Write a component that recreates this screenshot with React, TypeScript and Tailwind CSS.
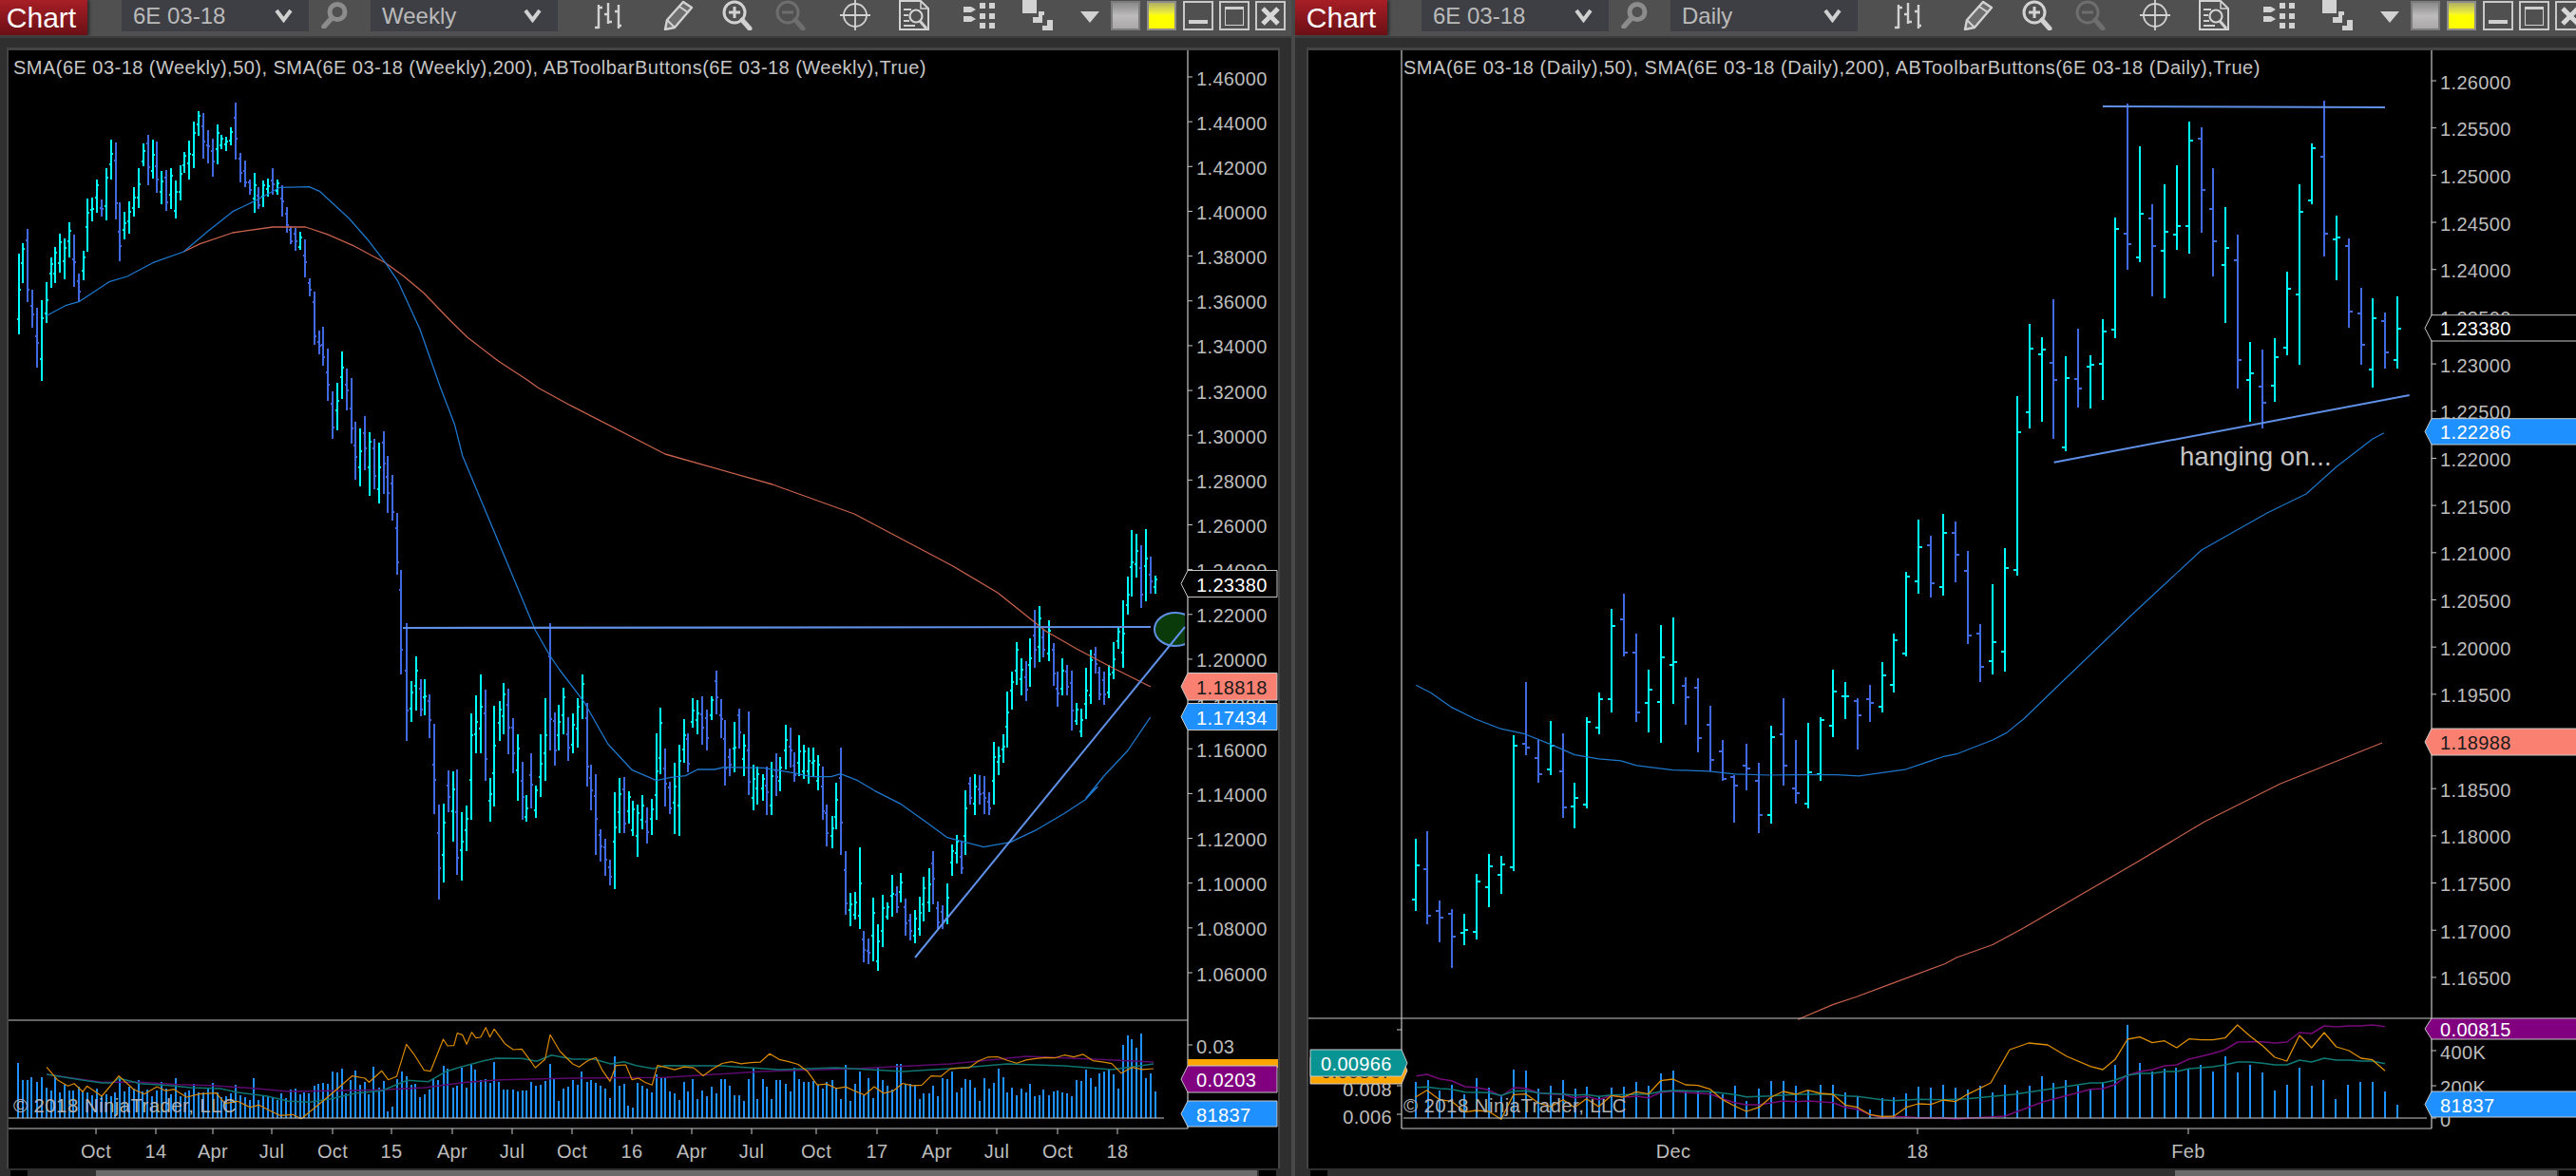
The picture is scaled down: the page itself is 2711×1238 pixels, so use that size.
import React from "react";

type Pt = [number, number];
type Bar = { x: number; t: number; b: number; o: number; c: number; up: boolean };

let seed = 12345;
const rnd = () => {
  seed = (seed * 16807) % 2147483647;
  return seed / 2147483647;
};

const pl = (pts: Pt[]) => "M" + pts.map((p) => `${p[0].toFixed(1)} ${p[1].toFixed(1)}`).join("L");

// ---------- weekly bars: [x, top, bottom, 1 = cyan] -----------
const w9: number[][] = [[52,562,815,1],[63,527,653,1],[75,484,713,0],[88,676,796,0],[102,733,922,0],[115,709,962,1],[128,652,780,1],[141,574,670,1],[152,541,655,1],[165,499,622,1],[178,514,641,1],[190,463,574,1],[203,502,665,0],[216,625,713,0],[229,553,644,1],[241,388,554,1],[254,385,460,1],[267,328,432,1],[280,390,445,0],[292,292,455,1],[305,202,327,1],[318,210,452,0],[330,400,584,0],[343,430,515,1],[356,395,497,1],[368,350,445,1],[381,292,418,1],[394,213,285,1],[407,187,344,0],[420,202,325,1],[432,208,370,0],[445,300,404,1],[458,298,425,0],[471,292,420,1],[483,330,449,1],[496,282,392,1],[508,240,305,1],[520,203,328,1],[533,145,290,1],[546,110,190,1],[559,118,262,0],[572,170,275,0],[585,198,317,0],[598,152,280,1],[610,185,232,1],[622,192,236,1],[635,163,218,1],[648,85,265,0],[661,242,335,0],[674,268,350,0],[687,328,375,0],[700,307,433,1],[711,352,420,0],[723,330,413,1],[737,325,380,1],[750,292,375,0],[763,328,375,1],[776,345,445,0],[788,415,495,0],[800,475,532,0],[812,480,553,0],[825,492,548,1],[838,515,635,0],[851,640,697,0],[864,680,848,0],[877,805,880,0],[888,793,914,0],[901,862,1025,0],[914,995,1147,0],[927,970,1120,1],[940,870,1020,1],[953,925,1057,0],[966,955,1160,0]];
const wMid: number[][] = [[374,444,505,0],[379,451,512,1],[384,438,495,0],[389,455,522,1],[394,462,515,0],[399,466,530,1],[404,454,520,0],[408,480,540,0],[413,500,548,0],[418,540,605,0]];
const w10: number[][] = [[44,-120,210,0],[54,48,420,0],[64,232,360,1],[74,153,325,1],[84,225,343,0],[92,225,340,1],[102,272,412,0],[111,367,650,0],[122,622,920,0],[131,618,868,1],[141,514,645,0],[150,516,738,1],[159,510,843,0],[168,645,862,1],[178,625,768,1],[188,334,668,1],[198,277,460,1],[208,210,460,1],[218,257,545,0],[228,537,675,1],[236,310,627,1],[246,295,420,1],[255,237,400,1],[265,255,462,0],[274,348,522,0],[284,400,610,1],[294,487,670,0],[302,590,675,1],[312,460,632,0],[321,560,662,1],[331,400,598,1],[341,285,545,1],[351,48,450,0],[361,330,498,0],[369,305,450,1],[378,252,400,1],[388,345,483,0],[398,333,458,1],[408,285,440,1],[417,210,350,1],[427,300,565,0],[435,495,640,0],[445,525,780,0],[454,700,800,0],[464,730,845,0],[474,795,875,0],[484,583,887,1],[494,537,710,1],[503,535,712,0],[513,578,680,1],[522,610,720,1],[531,622,785,1],[541,590,700,1],[551,630,743,0],[561,602,718,1],[570,396,670,1],[578,315,525,1],[588,445,627,0],[598,550,650,0],[608,490,715,1],[617,432,720,1],[627,352,490,1],[636,395,520,0],[645,285,378,1],[655,290,400,1],[664,278,432,0],[674,320,450,0],[684,278,355,1],[693,198,335,0],[703,288,410,0],[712,355,560,0],[722,445,530,0],[731,360,520,1],[741,318,445,0],[750,398,530,1],[760,328,590,0],[770,495,638,1],[779,500,622,1],[789,525,610,1],[798,500,655,0],[808,485,655,1],[817,458,595,0],[826,470,578,1],[837,370,510,1],[847,377,505,0],[855,455,548,0],[864,403,530,1],[874,433,540,1],[884,440,555,1],[894,440,530,1],[904,465,575,1],[913,500,670,0],[922,620,752,0],[932,658,758,1],[941,553,700,1],[951,442,780,0],[960,768,968,0],[970,900,1005,1],[980,898,985,1],[990,755,1015,1],[998,1020,1118,0],[1007,1045,1125,0],[1017,915,1115,1],[1027,1000,1145,1],[1037,905,1070,1],[1046,930,985,1],[1056,843,975,1],[1066,880,962,0],[1075,838,930,1],[1083,918,1035,0],[1094,965,1050,0],[1103,955,1058,1],[1113,912,1035,1],[1122,850,990,1],[1132,822,960,1],[1141,768,935,0],[1150,928,1018,0],[1160,940,1015,0],[1170,870,1000,1],[1179,748,845,1],[1190,718,808,1],[1199,735,840,0],[1207,575,780,1],[1217,535,620,0],[1227,525,655,1],[1237,528,620,0],[1246,530,650,0],[1256,583,655,0],[1266,423,620,1],[1275,437,527,1],[1285,400,490,1],[1294,265,442,1],[1303,202,320,1],[1313,108,242,1],[1323,160,275,1],[1332,168,295,0],[1341,95,248,1],[1350,5,188,0],[1360,-5,170,1],[1369,70,155,0]];
const w4: number[][] = [[12,340,467,1],[26,412,545,0],[40,502,612,0],[54,460,575,1],[68,480,575,0],[84,498,688,0],[99,600,670,1],[113,617,707,1],[128,490,650,1],[144,433,602,1],[158,424,508,0],[172,485,590,0],[186,500,605,0],[201,480,585,1],[216,407,525,1],[231,362,428,1],[246,275,490,1],[261,202,320,1],[272,55,265,1],[288,66,203,1],[303,102,300,0],[318,52,280,1],[333,138,255,0],[348,198,255,1]];

const mk = (x: number, t: number, b: number, up: boolean): Bar => {
  const h = b - t;
  const a = 0.15 + rnd() * 0.35;
  const z = 0.15 + rnd() * 0.35;
  return { x: Math.round(x), t: Math.round(t), b: Math.round(b), o: Math.round(up ? b - h * a : t + h * a), c: Math.round(up ? t + h * z : b - h * z), up };
};

const weekly: Bar[] = [
  ...w9.map((r) => mk(r[0] / 2.613, 80 + r[1] / 3, 80 + r[2] / 3, !!r[3])),
  ...wMid.map((r) => mk(r[0], r[1], r[2], !!r[3])),
  ...w10.map((r) => mk(400 + r[0] / 1.96, 640 + r[1] / 3, 640 + r[2] / 3, !!r[3])),
  ...w4.map((r) => mk(1100 + r[0] / 3, 540 + r[1] / 3, 540 + r[2] / 3, !!r[3])),
];

// ---------- daily bars: [dx, top, bottom, open, close, 1=cyan] ----------
const d11: number[][] = [[47,1100,1280,1252,1166,1],[76,1082,1315,1176,1292,0],[107,1255,1360,1280,1297,0],[137,1276,1424,1287,1344,0],[168,1288,1367,1335,1328,1],[199,1188,1353,1332,1207,1],[230,1137,1270,1221,1168,1],[261,1144,1237,1190,1164,1],[292,840,1180,1171,867,1],[323,708,890,862,871,0],[354,853,961,897,938,0],[384,806,942,927,867,1],[415,837,1047,931,1021,0],[444,961,1073,1019,997,1],[475,797,1023,1014,807,1],[506,733,838,822,752,1],[537,526,783,752,567,1],[567,488,645,552,634,0],[598,588,809,634,783,0],[629,676,835,760,727,1],[660,566,859,757,646,1],[691,547,762,665,658,1],[722,695,814,717,745,0],[753,699,885,723,848,0],[784,768,931,814,904,0],[815,852,956,881,950,0],[844,940,1059,945,967,0],[874,863,978,916,924,0],[905,909,1087,955,1040,0],[936,818,1063,1040,845,1],[967,749,968,838,916,0],[997,854,1012,974,986,0],[1028,811,1025,1012,933,1],[1059,795,954,938,804,1],[1090,676,847,818,731,1],[1121,707,800,744,743,1],[1152,749,876,755,791,0],[1183,714,807,750,760,0],[1214,659,785,769,692,1],[1243,588,735,715,603,1],[1274,433,645,636,444,1],[1304,302,488,456,370,1],[1335,341,496,365,461,0],[1366,288,493,470,335,1],[1397,307,458,335,389,0],[1427,379,612,430,591,0],[1458,564,707,586,669,0],[1489,464,690,655,608,1],[1520,372,683,632,423,1]];
const d7: number[][] = [[59,1012,1578,1125,1125,1],[92,784,1112,1062,860,1],[125,826,1092,878,863,1],[156,706,1145,905,960,0],[189,886,1184,1172,954,1],[222,798,1046,957,987,0],[256,882,1050,917,911,1],[289,768,1022,908,806,1],[323,448,828,800,483,1],[356,88,611,497,531,0],[390,222,588,572,434,1],[423,406,695,450,537,0],[456,343,701,552,492,1],[490,283,548,500,473,1],[523,145,560,473,204,1],[556,163,494,198,360,0],[587,292,632,420,521,0],[620,415,779,597,543,1],[654,502,986,581,897,0],[687,841,1091,960,939,1],[721,865,1112,981,1032,0],[754,829,1028,977,888,1],[787,619,881,857,672,1],[821,343,911,690,429,1],[854,214,404,393,228,1],[887,78,569,255,497,0],[921,442,644,516,510,1],[954,514,794,537,744,0],[988,670,911,750,848,0],[1018,703,983,927,765,1],[1052,748,923,774,873,0],[1085,697,923,897,798,1]];
const conv = (v: number, f: (n: number) => number) => Math.round(f(v));
const f11y = (n: number) => 420 + n / 2.376;
const f7y = (n: number) => 80 + n / 3;
const daily: Bar[] = [
  ...d11.map((r) => ({ x: Math.round(1470 + r[0] / 2.376), t: conv(r[1], f11y), b: conv(r[2], f11y), o: conv(r[3], f11y), c: conv(r[4], f11y), up: !!r[5] })),
  ...d7.map((r) => ({ x: Math.round(2100 + r[0] / 2.566), t: conv(r[1], f7y), b: conv(r[2], f7y), o: r[0] === 59 ? 600 : conv(r[3], f7y), c: conv(r[4], f7y), up: !!r[5] })),
];

const barPaths = (bars: Bar[], up: boolean, tick: number) =>
  bars
    .filter((b) => b.up === up)
    .map((b) => `M${b.x} ${b.t}V${b.b}M${b.x - tick} ${b.o}H${b.x}M${b.x} ${b.c}H${b.x + tick}`)
    .join("");

// ---------- moving averages ----------
const z9 = (a: number[][]): Pt[] => a.map((p) => [p[0] / 2.613, 80 + p[1] / 3]);
const z3 = (a: number[][]): Pt[] => a.map((p) => [p[0] / 2.24, 1000 + p[1] / 3]);
const z5 = (a: number[][]): Pt[] => a.map((p) => [1370 + p[0] / 2.24, 1000 + p[1] / 3]);
const z6 = (a: number[][]): Pt[] => a.map((p) => [2200 + p[0] / 3, 1000 + p[1] / 3]);
const z10 = (a: number[][]): Pt[] => a.map((p) => [400 + p[0] / 1.96, 640 + p[1] / 3]);
const z11 = (a: number[][]): Pt[] => a.map((p) => [1470 + p[0] / 2.376, 420 + p[1] / 2.376]);

const sma50L: Pt[] = [
  ...z9([[128,757],[180,725],[217,713],[300,650],[350,633],[420,590],[505,555],[570,492],[640,428],[700,395],[770,352],[850,350],[880,365],[960,450],[1010,515],[1060,590],[1095,650],[1155,800],[1210,980],[1250,1100],[1272,1200]]),
  ...z10([[320,70],[350,150],[370,195],[420,295],[470,430],[520,512],[570,545],[600,535],[630,530],[655,510],[690,510],[710,503],[790,505],[850,520],[890,533],[930,533],[950,524],[985,545],[1020,577],[1075,620],[1130,680],[1170,725],[1245,755],[1300,740],[1355,700],[1410,650],[1455,605],[1480,565]]),
  [1143, 840], [1161.7, 817], [1187, 790], [1210.7, 755],
];
const sma200L: Pt[] = [
  ...z9([[505,555],[550,530],[640,495],[750,477],[840,477],[900,500],[970,535],[1060,590],[1110,632],[1165,685],[1240,775],[1285,825],[1370,900],[1450,960],[1480,985],[1568,1040]]),
  [700, 478], [813, 510], [899, 541], [1003, 596], [1050, 624], [1100, 664], [1133, 683], [1167, 701], [1211, 723],
];
const sma50R: Pt[] = [
  ...z11([[48,716],[85,735],[135,770],[195,800],[260,825],[320,838],[385,864],[445,890],[505,900],[560,905],[600,917],[690,928],[780,931],[845,938],[930,941],[1000,940],[1100,940],[1155,943],[1270,927],[1365,895],[1400,888],[1490,853],[1525,835],[1568,800]]),
  [2170, 718], [2248, 643], [2317, 579], [2386, 540], [2427, 520], [2458.5, 491.7], [2497, 462], [2509, 455.7],
];
const sma200R: Pt[] = [
  ...z11([[1003,1552],[1090,1515],[1150,1495],[1230,1465],[1370,1413],[1400,1397],[1490,1365],[1568,1323]]),
  [2250, 907], [2320, 865], [2400, 825], [2507, 782],
];

// ---------- lower panel (left) ----------
const volTopsL = [[43,357],[53,411],[65,411],[75,402],[87,417],[98,402],[109,435],[120,444],[129,402],[141,450],[152,426],[163,444],[173,444],[185,432],[195,447],[205,450],[217,459],[228,438],[240,462],[250,456],[261,462],[272,450],[282,402],[293,447],[304,432],[315,438],[326,411],[337,447],[348,441],[359,462],[370,444],[380,417],[392,438],[403,456],[414,405],[425,462],[436,450],[446,444],[457,423],[468,450],[480,450],[490,435],[501,420],[512,450],[522,465],[533,462],[544,453],[555,426],[566,459],[577,465],[588,474],[599,405],[610,474],[620,462],[631,462],[642,468],[653,474],[664,453],[675,468],[685,441],[696,438],[707,456],[717,450],[729,453],[741,429],[751,423],[761,420],[772,423],[783,384],[795,387],[806,375],[816,453],[827,411],[838,381],[849,426],[860,417],[870,456],[881,369],[893,435],[905,414],[915,510],[925,495],[936,408],[947,384],[958,399],[969,426],[980,423],[991,465],[1001,456],[1012,441],[1022,408],[1033,411],[1046,366],[1056,375],[1068,435],[1078,429],[1088,372],[1099,435],[1110,363],[1121,378],[1133,411],[1145,408],[1155,420],[1165,354],[1176,417],[1187,441],[1197,441],[1209,441],[1220,447],[1231,444],[1241,444],[1252,417],[1263,429],[1274,426],[1285,414],[1296,360],[1307,405],[1317,477],[1328,438],[1339,432],[1350,411],[1361,426],[1372,384],[1384,417],[1394,411],[1405,420],[1415,429],[1427,438],[1438,468],[1449,336],[1460,429],[1471,423],[1481,492],[1492,498],[1503,420],[1514,429],[1525,438],[1536,450],[1547,393],[1558,402]];
const volL: Pt[] = volTopsL.map((p) => [Math.round(p[0] / 2.24), 1000 + p[1] / 3]);
weekly.filter((b) => b.x > 697).forEach((b) => {
  let h = 18 + rnd() * 24;
  if (rnd() > 0.85) h += 16;
  if (b.x > 1130) h += 10;
  if (b.x > 1180 && b.x < 1205) h = 70 + rnd() * 24;
  if (b.x > 1212) h = 28;
  volL.push([b.x, 1177 - h]);
});

const jitter = (pts: Pt[], amp: number): Pt[] => {
  const out: Pt[] = [];
  for (let i = 0; i < pts.length - 1; i++) {
    const [x0, y0] = pts[i];
    const [x1, y1] = pts[i + 1];
    const n = Math.max(1, Math.round((x1 - x0) / 10));
    for (let k = 0; k < n; k++) out.push([x0 + ((x1 - x0) * k) / n, y0 + ((y1 - y0) * k) / n + (rnd() - 0.5) * amp]);
  }
  out.push(pts[pts.length - 1]);
  return out;
};

const orangeL: Pt[] = [
  ...z3([[110,370],[135,410],[160,430],[175,422],[195,448],[205,430],[240,462],[280,398],[315,440],[340,455],[370,432],[390,445],[410,440],[440,465],[470,455],[510,452],[530,485],[560,478],[590,497],[610,490],[640,510],[660,523],[690,520],[710,533],[750,490],[790,445],[830,398],[860,405],[870,418],[900,382],[915,410],[935,400],[958,298],[975,328],[1000,380],[1015,383],[1045,282],[1055,303],[1070,302],[1078,263],[1090,268],[1100,298],[1112,260],[1122,278],[1133,276],[1145,245],[1155,275],[1165,250],[1190,296],[1210,315],[1230,313],[1245,340],[1262,372],[1285,345],[1297,268],[1320,320],[1350,360],[1365,370],[1385,350],[1405,340],[1420,380],[1438,415],[1452,365],[1475,363],[1490,410],[1505,405],[1520,418],[1537,427],[1550,365],[1568,370]]),
  ...jitter([[710,1123],[740,1130],[780,1118],[820,1112],[860,1138],[900,1150],[950,1145],[1000,1130],[1040,1110],[1090,1118],[1140,1108],[1180,1130],[1214,1125]], 10),
];
const tealL: Pt[] = [
  ...z3([[110,393],[190,410],[240,420],[265,420],[280,405],[330,422],[400,428],[450,435],[520,438],[560,450],[630,462],[680,478],[730,481],[780,470],[840,452],[900,445],[960,412],[1010,416],[1050,385],[1080,372],[1140,350],[1170,342],[1230,343],[1265,352],[1300,332],[1350,345],[1400,345],[1440,360],[1470,353],[1500,365],[1540,375],[1568,365]]),
  [760, 1122], [820, 1126], [880, 1124], [950, 1128], [1000, 1125], [1060, 1120], [1120, 1122], [1170, 1126], [1214, 1120],
];
const purpleL: Pt[] = [
  ...z3([[110,393],[200,410],[240,418],[330,418],[420,425],[500,428],[600,437],[680,447],[780,445],[900,442],[1000,435],[1100,418],[1180,410],[1350,405],[1568,403]]),
  [800, 1128], [900, 1125], [1000, 1120], [1080, 1112], [1150, 1115], [1214, 1118],
];

// ---------- lower panel (right) ----------
const volR: Pt[] = [
  ...[418,412,445,427,456,406,436,462,378,381,438,430,411,438,433,465,435,433,417,430,390,381,445,448,448,455,430,478,438,415,414,430,445,427,427,450,463,505,468,465,453,433,436,427,435,440,430,450,425,445,430,400,420,410,430].map((d, i): Pt => [Math.round(1489.6 + i * 12.92), 1000 + d / 3]),
  ...[442,418,363,237,357,384,375,372,378,363,384,336,387,363,387,444,426,372,429,411,471,426,417,417,447,489].map((d, i): Pt => [Math.round(2200 + i * 12.92), 1000 + d / 3]),
];
const purpleR: Pt[] = [
  ...z5([[270,398],[295,393],[325,407],[353,413],[385,432],[410,434],[440,442],[470,462],[500,435],[528,437],[560,452],[590,456],[616,456],[643,467],[671,462],[700,473],[730,460],[760,465],[790,462],[817,467],[846,450],[875,446],[905,450],[963,455],[992,470],[1020,482],[1048,489],[1078,489],[1135,477],[1165,479],[1193,477],[1252,482],[1281,497],[1310,503],[1339,520],[1368,530],[1396,527],[1425,527],[1453,530],[1512,530],[1541,534],[1568,532]]),
  [2110, 1175], [2150, 1160],
  ...z6([[0,440],[39,438],[78,425],[117,396],[156,384],[195,378],[234,366],[272,363],[311,345],[350,336],[386,327],[425,315],[464,291],[504,290],[543,290],[582,294],[620,291],[660,261],[698,264],[738,240],[776,243],[816,240],[854,240],[890,237],[930,242]]),
];
const tealR: Pt[] = [
  ...z5([[270,434],[295,433],[325,438],[353,440],[385,449],[440,451],[470,460],[500,446],[528,445],[560,452],[616,455],[643,459],[671,457],[700,463],[730,458],[790,456],[817,455],[846,447],[875,444],[960,447],[1020,457],[1048,464],[1106,461],[1165,456],[1252,456],[1281,461],[1310,463],[1339,468],[1368,473],[1396,476],[1453,472],[1512,473],[1568,470]]),
  [2120, 1152], [2160, 1146],
  ...z6([[0,420],[39,420],[78,411],[117,396],[156,390],[195,390],[234,384],[272,384],[311,375],[350,372],[386,369],[425,363],[464,354],[504,354],[543,358],[582,363],[620,363],[660,348],[698,354],[738,342],[776,348],[816,348],[854,351],[890,351],[930,359]]),
];
const orangeR: Pt[] = [
  ...z5([[268,465],[295,443],[325,473],[353,478],[385,512],[411,507],[441,510],[470,535],[499,457],[528,455],[558,483],[587,495],[616,473],[643,497],[671,470],[700,495],[730,460],[759,465],[788,448],[817,455],[846,413],[875,408],[905,426],[934,428],[963,440],[992,473],[1019,492],[1048,510],[1078,497],[1106,465],[1135,447],[1165,456],[1193,443],[1222,453],[1252,456],[1281,490],[1310,497],[1339,520],[1368,526],[1396,525],[1425,497],[1453,486],[1483,488],[1512,474],[1541,479],[1568,457]]),
  [2095, 1140], [2115, 1105], [2135, 1098], [2155, 1100], [2175, 1112],
  ...z6([[0,368],[39,378],[78,346],[117,282],[156,275],[195,293],[234,287],[272,309],[311,281],[350,284],[386,284],[425,278],[464,237],[504,272],[543,302],[582,339],[620,351],[660,270],[698,309],[738,261],[776,306],[816,318],[854,342],[890,347],[930,382]]),
];

// ---------- chart helpers ----------
const AX = "#c8c8c8";
const LBL = "#bcbcbc";
const TREND = "#5f90e6";

function Tag({ x, end, top, bot, fill, text, color }: { x: number; end: number; top: number; bot: number; fill: string; text: string; color: string }) {
  const cy = (top + bot) / 2;
  return (
    <g>
      <polygon points={`${x - 7},${cy} ${x},${top} ${end},${top} ${end},${bot} ${x},${bot}`} fill={fill} stroke={AX} strokeWidth="1" />
      <text x={x + 9} y={cy + 8} fill={color} fontSize="20" letterSpacing="0.35">{text}</text>
    </g>
  );
}

function AxisLabel({ axis, y, text }: { axis: number; y: number; text: string }) {
  return (
    <g>
      <path d={`M${axis} ${y}h5`} stroke={AX} strokeWidth="1" />
      <text x={axis + 9} y={y + 8.5} fill={LBL} fontSize="20" letterSpacing="0.35">{text}</text>
    </g>
  );
}

function Time({ x, text }: { x: number; text: string }) {
  return (
    <g>
      <path d={`M${x} 1188v6`} stroke={AX} strokeWidth="1" />
      <text x={x} y={1219} fill={LBL} fontSize="20" letterSpacing="0.3" textAnchor="middle">{text}</text>
    </g>
  );
}

function Line({ pts, color, w = 1.3 }: { pts: Pt[]; color: string; w?: number }) {
  return <path d={pl(pts)} fill="none" stroke={color} strokeWidth={w} strokeLinejoin="round" />;
}

function Bars({ bars, tick }: { bars: Bar[]; tick: number }) {
  return (
    <g shapeRendering="crispEdges" fill="none" strokeWidth="2">
      <path d={barPaths(bars, false, tick)} stroke="#4169e1" />
      <path d={barPaths(bars, true, tick)} stroke="#00ffff" />
    </g>
  );
}

function Vol({ pts }: { pts: Pt[] }) {
  return (
    <path shapeRendering="crispEdges" d={pts.map((p) => `M${p[0]} ${p[1].toFixed(0)}V1177`).join("")} stroke="#1e90ff" strokeWidth="2" fill="none" />
  );
}

const weeklyTicks: [number, string][] = [[101,"Oct"],[164,"14"],[224,"Apr"],[286,"Jul"],[350,"Oct"],[412,"15"],[476,"Apr"],[539,"Jul"],[602,"Oct"],[665,"16"],[728,"Apr"],[791,"Jul"],[859,"Oct"],[923,"17"],[986,"Apr"],[1049,"Jul"],[1113,"Oct"],[1176,"18"]];

function WeeklyChart() {
  const labels = Array.from({ length: 21 }, (_, i) => ({ y: 81 + i * 47.15, t: (1.46 - i * 0.02).toFixed(5) }));
  return (
    <svg className="absolute inset-0 block" width="1336" height="1177" viewBox="9 53 1336 1177">
      <defs>
        <clipPath id="ellClip"><rect x="1200" y="630" width="47" height="70" /></clipPath>
      </defs>
      <Vol pts={volL} />
      <Line pts={purpleL} color="#5c0a6e" w={1.5} />
      <Line pts={tealL} color="#0d7470" w={1.5} />
      <Line pts={orangeL} color="#d98a00" w={1.2} />
      <Bars bars={weekly} tick={2} />
      <Line pts={sma200L} color="#c8614c" w={1.3} />
      <Line pts={sma50L} color="#1d77cc" w={1.3} />
      <ellipse cx="1237" cy="662.5" rx="22" ry="17.5" fill="#0a3a0a" stroke={TREND} strokeWidth="2" clipPath="url(#ellClip)" />
      <path d="M424 661L1211 660" stroke={TREND} strokeWidth="2.2" fill="none" />
      <path d="M963 1008L1247 660" stroke={TREND} strokeWidth="2" fill="none" />
      <g fill="none" stroke={AX} strokeWidth="1.2">
        <path d="M1250 53V1188M9 1074H1250M9 1177H1225M9 1188H1250" />
      </g>
      {labels.map((l) => <AxisLabel key={l.t} axis={1250} y={l.y} text={l.t} />)}
      <AxisLabel axis={1250} y={1100} text="0.03" />
      <Tag x={1250} end={1344} top={600.5} bot={628.5} fill="#000" text="1.23380" color="#fff" />
      <Tag x={1250} end={1344} top={708.5} bot={737} fill="#fa8072" text="1.18818" color="#1a1a1a" />
      <Tag x={1250} end={1344} top={740.5} bot={768.5} fill="#1e90ff" text="1.17434" color="#fff" />
      <rect x="1250" y="1115" width="95" height="9" fill="#ffa500" />
      <Tag x={1250} end={1344} top={1122} bot={1150} fill="#800080" text="0.0203" color="#fff" />
      <Tag x={1250} end={1344} top={1159} bot={1186} fill="#1e90ff" text="81837" color="#fff" />
      {weeklyTicks.map(([x, t], i) => <Time key={i} x={x} text={t} />)}
    </svg>
  );
}

function DailyChart() {
  const labels = Array.from({ length: 20 }, (_, i) => ({ y: 85 + i * 49.68, t: (1.26 - i * 0.005).toFixed(5) }));
  return (
    <svg className="absolute inset-0 block" width="1336" height="1177" viewBox="1377 53 1336 1177">
      <Vol pts={volR} />
      <Line pts={purpleR} color="#750a78" w={1.5} />
      <Line pts={tealR} color="#0d7a76" w={1.5} />
      <Line pts={orangeR} color="#dd8e00" w={1.3} />
      <Bars bars={daily} tick={4} />
      <Line pts={sma50R} color="#1d77cc" w={1.2} />
      <Line pts={sma200R} color="#c8614c" w={1.2} />
      <path d="M2213 112L2510 113M2161.6 486.7L2535.7 416" stroke={TREND} strokeWidth="2" fill="none" />
      <text x="2294" y="490" fill="#c4c4c4" fontSize="27.6">hanging on...</text>
      <g fill="none" stroke={AX} strokeWidth="1.2">
        <path d="M1475 53V1188M2559 53V1188M1377 1072H2559M1477 1177H2554M1475 1188H2559" />
        <path d="M1470 1084h5M1470 1143h5M1470 1173h5" />
      </g>
      <text x="1465" y="1154" fill={LBL} fontSize="20" textAnchor="end" letterSpacing="0.35">0.008</text>
      <text x="1465" y="1183" fill={LBL} fontSize="20" textAnchor="end" letterSpacing="0.35">0.006</text>
      <polygon points="1379,1113 1475,1113 1481,1127 1475,1141 1379,1141" fill="#ffa500" stroke={AX} strokeWidth="1" />
      <text x="1390" y="1135" fill="#222" fontSize="20" letterSpacing="0.35">0.00867</text>
      <polygon points="1379,1105 1475,1105 1481,1119 1475,1133 1379,1133" fill="#0a9393" stroke={AX} strokeWidth="1" />
      <text x="1390" y="1127" fill="#fff" fontSize="20" letterSpacing="0.35">0.00966</text>
      {labels.map((l) => <AxisLabel key={l.t} axis={2559} y={l.y} text={l.t} />)}
      <AxisLabel axis={2559} y={1106} text="400K" />
      <AxisLabel axis={2559} y={1143} text="200K" />
      <AxisLabel axis={2559} y={1177} text="0" />
      <Tag x={2559} end={2720} top={331.7} bot={359} fill="#000" text="1.23380" color="#fff" />
      <Tag x={2559} end={2720} top={440.7} bot={468} fill="#1e90ff" text="1.22286" color="#fff" />
      <Tag x={2559} end={2720} top={767} bot={795} fill="#fa8072" text="1.18988" color="#1a1a1a" />
      <Tag x={2559} end={2720} top={1072} bot={1094} fill="#800080" text="0.00815" color="#fff" />
      <Tag x={2559} end={2720} top={1149} bot={1176} fill="#1e90ff" text="81837" color="#fff" />
      <Time x={1761} text="Dec" />
      <Time x={2018} text="18" />
      <Time x={2303} text="Feb" />
    </svg>
  );
}

// ---------- toolbar icons ----------
const IC = "#d2d2d2";

const Chevron = () => (
  <svg width="19" height="15" viewBox="0 0 19 15" fill="none" className="block"><path d="M2 2l7.5 10L17 2" stroke="#d0d0d0" strokeWidth="4" /></svg>
);

const Select = ({ label }: { label: string }) => (
  <div className="flex h-[33px] w-[197px] shrink-0 items-center justify-between bg-[#3e3f45] pl-[12px] pr-[17px] text-[24px] text-[#bababa]">
    <span>{label}</span>
    <Chevron />
  </div>
);

const IconBars = () => (
  <svg width="29" height="30" viewBox="0 0 29 30" fill="none" stroke={IC} strokeWidth="2.4" className="mt-[3px] block shrink-0">
    <path d="M4 2V27M14 0V22M25 2V27" />
    <path d="M4 5h4M0 26h4M10 12h4M14 20h4M21 9h4M25 24h3" />
  </svg>
);
const IconPencil = () => (
  <svg width="34" height="32" viewBox="0 0 34 32" fill="none" className="block shrink-0">
    <path d="M4 21L21 2L30 8L12 29L2 31Z" fill="#6e6e6e" stroke={IC} strokeWidth="2.4" strokeLinejoin="round" />
    <path d="M17 7l9 6M4 21l8 8" stroke={IC} strokeWidth="2" />
  </svg>
);
const IconZoom = ({ c, minus }: { c: string; minus?: boolean }) => (
  <svg width="32" height="32" viewBox="0 0 32 32" fill="none" stroke={c} className="block shrink-0">
    <circle cx="13" cy="13" r="11" strokeWidth="3" />
    <path d="M21 21l8 9" strokeWidth="5" strokeLinecap="round" />
    <path d={minus ? "M7 13h12" : "M7 13h12M13 7v12"} strokeWidth="3" />
  </svg>
);
const IconCross = () => (
  <svg width="32" height="32" viewBox="0 0 32 32" fill="none" stroke={IC} strokeWidth="1.8" className="block shrink-0">
    <circle cx="16" cy="16" r="12" />
    <path d="M16 0V32M0 16H32" />
  </svg>
);
const IconDoc = () => (
  <svg width="32" height="32" viewBox="0 0 32 32" fill="none" stroke={IC} className="block shrink-0">
    <path d="M1 1H23L31 9V31H1Z" strokeWidth="2" />
    <path d="M23 1V9H31" strokeWidth="1.5" />
    <path d="M5 10h8M5 16h5M5 22h6M5 27h12" strokeWidth="2" />
    <circle cx="18" cy="17" r="6.5" strokeWidth="2.2" />
    <path d="M22 22l7 8" strokeWidth="3.2" />
  </svg>
);
const IconDraw = () => (
  <svg width="33" height="28" viewBox="0 0 33 28" fill={IC} className="mt-[3px] block shrink-0">
    <path d="M0 4H8L13 7L8 10H0ZM0 14H8L13 17L8 20H0Z" />
    <path d="M17 0h6v6h-6zM27 0h6v6h-6zM17 11h6v6h-6zM27 11h6v6h-6zM17 21h6v6h-6zM27 21h6v6h-6z" />
  </svg>
);
const IconSteps = () => (
  <svg width="33" height="32" viewBox="0 0 33 32" fill={IC} className="block shrink-0">
    <path d="M1 0H16V14H1Z" />
    <path d="M18 12H24V16H22V24H12V18H18Z" />
    <path d="M27 21H33V32H22V27H27Z" />
  </svg>
);
const IconTri = () => (
  <svg width="20" height="12" viewBox="0 0 20 12" fill={IC} className="mt-[12px] block shrink-0"><path d="M0 0H20L10 12Z" /></svg>
);
const IconMag = () => (
  <svg width="28" height="28" viewBox="0 0 28 28" fill="none" stroke="#8c8c8c" className="mt-[2px] block shrink-0">
    <circle cx="17" cy="10.5" r="8" strokeWidth="5" />
    <path d="M11 17L3 26" strokeWidth="5.5" strokeLinecap="round" />
  </svg>
);

const Toolbar = ({ period }: { period: string }) => (
  <div className="flex h-[38px] w-[1364px] shrink-0 items-start bg-[#505050]">
    <div className="flex h-[37px] w-[97px] shrink-0 items-center justify-center bg-linear-to-b from-[#a81e26] to-[#6b1015] text-[30px] leading-none text-white shadow-[2px_0_3px_rgba(0,0,0,0.5)]">Chart</div>
    <div className="ml-[36px] shrink-0"><Select label="6E 03-18" /></div>
    <div className="ml-[13px] shrink-0"><IconMag /></div>
    <div className="ml-[24px] shrink-0"><Select label={period} /></div>
    <div className="ml-[39px] shrink-0"><IconBars /></div>
    <div className="ml-[43px] shrink-0"><IconPencil /></div>
    <div className="ml-[28px] shrink-0"><IconZoom c={IC} /></div>
    <div className="ml-[24px] shrink-0"><IconZoom c="#6e6e6e" minus /></div>
    <div className="ml-[36px] shrink-0"><IconCross /></div>
    <div className="ml-[30px] shrink-0"><IconDoc /></div>
    <div className="ml-[36px] shrink-0"><IconDraw /></div>
    <div className="ml-[28px] shrink-0"><IconSteps /></div>
    <div className="ml-[29px] shrink-0"><IconTri /></div>
    <div className="ml-[12px] mt-px h-[31px] w-[31px] shrink-0 border-2 border-[#7c7c7c] bg-linear-to-b from-[#8a8a8a] via-[#bdbbbb] to-[#a9a7a7]" />
    <div className="ml-[7px] mt-px h-[31px] w-[31px] shrink-0 border-2 border-[#8c8c8c] bg-linear-to-b from-[#b0b060] via-[#ffff00] to-[#ffff00]" />
    <div className="ml-[7px] mt-px flex h-[31px] w-[32px] shrink-0 items-end justify-center border-2 border-[#c8c8c8] pb-[5px]">
      <div className="h-[4px] w-[20px] bg-[#d0d0d0]" />
    </div>
    <div className="ml-[6px] mt-px flex h-[31px] w-[32px] shrink-0 items-center justify-center border-2 border-[#c8c8c8]">
      <div className="h-[20px] w-[20px] border border-t-[3px] border-[#d0d0d0]" />
    </div>
    <div className="ml-[6px] mt-px flex h-[31px] w-[32px] shrink-0 items-center justify-center border-2 border-[#c8c8c8]">
      <svg width="20" height="20" viewBox="0 0 20 20" stroke="#d8d8d8" strokeWidth="5" className="block"><path d="M2 2L18 18M18 2L2 18" /></svg>
    </div>
  </div>
);

const Panel = ({ period, legend, chart, thumbLeft, thumbWidth, margin, legendPad, legendTrack }: { period: string; legend: string; chart: React.ReactNode; thumbLeft: string; thumbWidth: string; margin: string; legendPad: string; legendTrack: string }) => (
  <div className={`flex h-[1238px] w-[1364px] shrink-0 flex-col bg-[#2f2f30] ${margin}`}>
    <Toolbar period={period} />
    <div className="h-[2px] shrink-0 bg-[#3d3d3d]" />
    <div className="h-[10px] shrink-0" />
    <div className="ml-[12px] w-[1340px] border-x-2 border-t-[3px] border-[#444445]">
      <div className="relative h-[1177px] w-[1336px] overflow-hidden bg-black">
        {chart}
        <div className={`absolute top-[3px] whitespace-nowrap text-[20px] text-[#c6c6c6] ${legendTrack} ${legendPad}`}>{legend}</div>
        <div className={`absolute bottom-[50px] whitespace-nowrap text-[20.5px] tracking-[0.38px] text-[#b0b0b0] ${legendPad}`}>© 2018 NinjaTrader, LLC</div>
      </div>
    </div>
    <div className="flex h-[8px] shrink-0 items-end pl-[16px] pt-[2px]">
      <div className="h-[6px] w-[18px] shrink-0 bg-black" />
      <div className={`h-[6px] shrink-0 bg-[#6a6a6a] ${thumbLeft} ${thumbWidth}`} />
      <div className="ml-[2px] h-[6px] w-[18px] shrink-0 bg-black" />
    </div>
  </div>
);

export default function App() {
  return (
    <div className="flex h-[1238px] w-[2711px] overflow-hidden bg-[#484848] font-['Liberation_Sans',Arial,sans-serif]">
      <Panel
        margin="-ml-[5px]"
        period="Weekly"
        legend="SMA(6E 03-18 (Weekly),50), SMA(6E 03-18 (Weekly),200), ABToolbarButtons(6E 03-18 (Weekly),True)"
        chart={<WeeklyChart />}
        thumbLeft="ml-[72px]"
        thumbWidth="w-[1222px]"
        legendPad="left-[5px]"
        legendTrack="tracking-[0.47px]"
      />
      <Panel
        margin="ml-[4px]"
        period="Daily"
        legend="SMA(6E 03-18 (Daily),50), SMA(6E 03-18 (Daily),200), ABToolbarButtons(6E 03-18 (Daily),True)"
        chart={<DailyChart />}
        thumbLeft="ml-[892px]"
        thumbWidth="w-[402px]"
        legendPad="left-[100px]"
        legendTrack="tracking-[0.52px]"
      />
    </div>
  );
}
